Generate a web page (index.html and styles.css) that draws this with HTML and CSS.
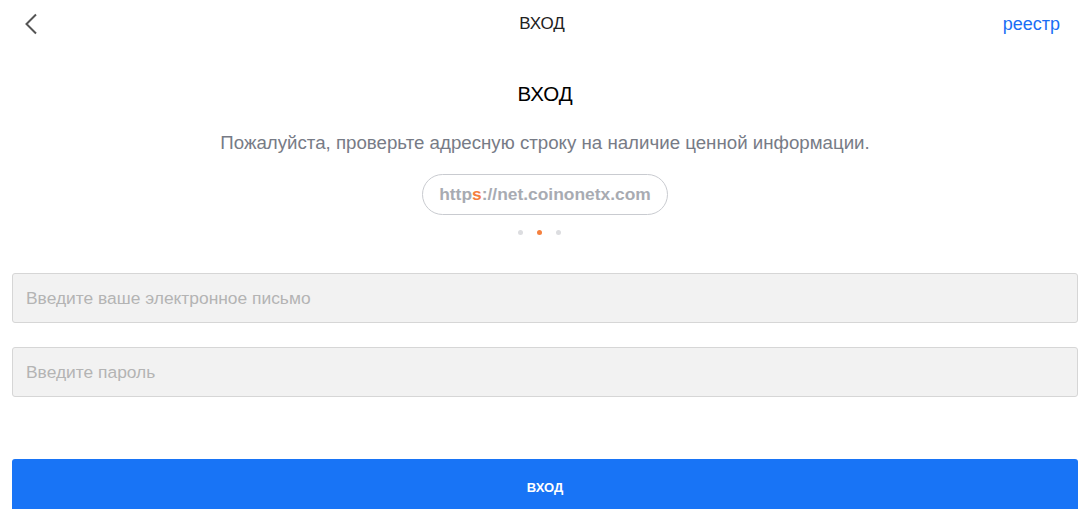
FILE: index.html
```html
<!DOCTYPE html>
<html lang="ru">
<head>
<meta charset="utf-8">
<link rel="stylesheet" href="styles.css">
<title>вход</title>
</head>
<body>
<div class="page">
  <header class="topbar">
    <a class="back" href="#" aria-label="назад">
      <svg width="14" height="22" viewBox="0 0 14 22"><path d="M12 1.5 L2.5 11 L12 20.5" fill="none" stroke="#555" stroke-width="2"/></svg>
    </a>
    <div class="topbar-title">вход</div>
    <a class="topbar-link" href="#">реестр</a>
  </header>
  <section class="intro">
    <h1 class="heading">вход</h1>
    <p class="notice">Пожалуйста, проверьте адресную строку на наличие ценной информации.</p>
    <div class="url-pill">http<span class="accent">s</span>://net.coinonetx.com</div>
    <div class="dots"><span class="dot"></span><span class="dot active"></span><span class="dot"></span></div>
  </section>
  <form class="form">
    <input class="field" type="text" placeholder="Введите ваше электронное письмо">
    <input class="field" type="password" placeholder="Введите пароль">
    <button class="submit" type="button">вход</button>
  </form>
</div>
</body>
</html>
```

FILE: styles.css
```css
* { box-sizing: border-box; }
html, body { margin: 0; padding: 0; background: #fff; }
body { font-family: "Liberation Sans", Arial, sans-serif; color: #222; }
.page { width: 1090px; height: 509px; overflow: hidden; }
.topbar {
  height: 46px;
  padding: 2px 30px 0 24px;
  display: flex;
  align-items: center;
  justify-content: space-between;
}
.back { display: flex; width: 60px; }
.topbar-title { font-size: 17px; text-transform: uppercase; color: #222; }
.topbar-link { width: 60px; text-align: right; font-size: 18px; color: #1a6ef5; text-decoration: none; }
.intro { display: flex; flex-direction: column; align-items: center; }
.heading {
  margin: 35px 0 0;
  font-size: 20.5px;
  line-height: 26px;
  font-weight: normal;
  text-transform: uppercase;
  color: #000;
}
.notice { margin: 25px 0 0; font-size: 18.7px; line-height: 22px; color: #777b86; }
.url-pill {
  margin-top: 20px;
  height: 41px;
  padding: 0 16px;
  border: 1px solid #c9cbd0;
  border-radius: 21px;
  display: flex;
  align-items: center;
  font-size: 17.4px;
  font-weight: bold;
  color: #a8abb2;
}
.accent { color: #f5803e; }
.dots { margin-top: 15px; padding-right: 12px; display: flex; gap: 14px; }
.dot { width: 5px; height: 5px; border-radius: 50%; background: #dcdde0; }
.dot.active { background: #f5803e; }
.form { display: flex; flex-direction: column; padding: 0 12px; margin-top: 38px; }
.field {
  height: 50px;
  margin-bottom: 24px;
  padding: 0 13px;
  background: #f2f2f2;
  border: 1px solid #d6d6d6;
  border-radius: 3px;
  font-family: inherit;
  font-size: 17.4px;
  color: #333;
  outline: none;
}
.field::placeholder { color: #b4b4b4; }
.submit {
  margin-top: 38px;
  height: 56px;
  border: 0;
  border-radius: 3px;
  background: #1874f6;
  color: #fff;
  font-family: inherit;
  font-size: 13px;
  font-weight: bold;
  text-transform: uppercase;
}
```
